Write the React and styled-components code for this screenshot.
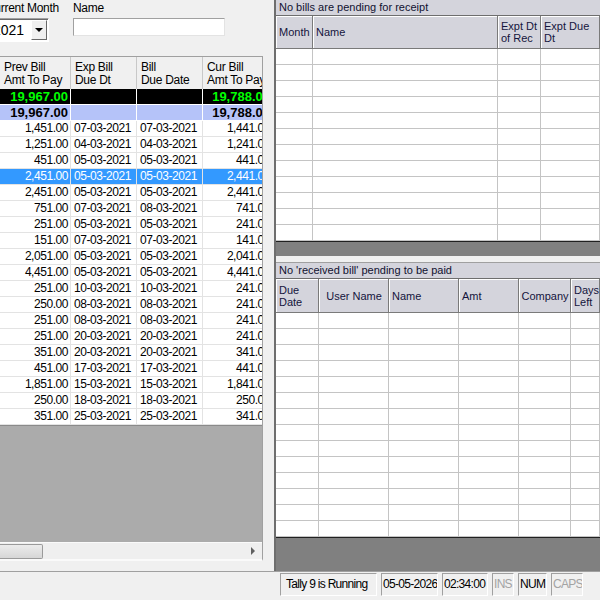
import React from 'react'
import styled, { createGlobalStyle } from 'styled-components'

const GlobalStyle = createGlobalStyle`
  html, body { margin: 0; padding: 0; background: #f0f0f0; }
  body { font-family: "Liberation Sans", Arial, sans-serif; }
`

const Window = styled.div`
  width: 600px;
  height: 600px;
  overflow: hidden;
  display: flex;
  flex-direction: column;
  background: #f0f0f0;
`

const Main = styled.div`
  height: 571px;
  display: flex;
  flex-shrink: 0;
`

/* ---------- left side ---------- */

const LeftPanel = styled.div`
  width: 274px;
  flex-shrink: 0;
  overflow: hidden;
  display: flex;
  flex-direction: column;
`

const FilterRow = styled.div`
  height: 56px;
  display: flex;
  align-items: flex-start;
  gap: 24px;
  flex-shrink: 0;
`

const Field = styled.div`
  display: flex;
  flex-direction: column;
  gap: 3px;
  margin-left: ${p => p.$shift || 0}px;
  width: ${p => p.$w}px;
  flex-shrink: 0;
`

const Label = styled.div`
  font-size: 12px;
  letter-spacing: -0.3px;
  color: #000;
  padding-top: 1px;
  white-space: nowrap;
`

const Combo = styled.div`
  height: 24px;
  box-sizing: border-box;
  border: 1px solid #a0a0a0;
  border-right-color: #fff;
  border-bottom-color: #fff;
  background: #fff;
  display: flex;
  align-items: center;
  font-size: 14px;
  padding-left: 6px;
  box-shadow: inset 1px 1px 0 #696969;
`

const ComboText = styled.span`
  flex: 1;
`

const DropButton = styled.div`
  width: 16px;
  height: 20px;
  margin-right: 1px;
  box-sizing: border-box;
  background: #f0f0f0;
  border: 1px solid #fff;
  border-right-color: #696969;
  border-bottom-color: #696969;
  display: flex;
  align-items: center;
  justify-content: center;
  &::after {
    content: '';
    border-left: 4px solid transparent;
    border-right: 4px solid transparent;
    border-top: 4px solid #000;
  }
`

const TextBox = styled.div`
  height: 18px;
  box-sizing: border-box;
  background: #fff;
  border: 1px solid #a0a0a0;
  border-right-color: #e3e3e3;
  border-bottom-color: #e3e3e3;
`

const Grid = styled.div`
  width: 263px;
  height: 505px;
  box-sizing: border-box;
  border-top: 1px solid #a0a0a0;
  border-right: 1px solid #a0a0a0;
  border-bottom: 2px solid #fafafa;
  display: flex;
  flex-direction: column;
  overflow: hidden;
  flex-shrink: 0;
`

const GridRow = styled.div`
  display: flex;
  flex-shrink: 0;
  height: ${p => (p.$head ? 32 : 16)}px;
  background: ${p => p.$bg || '#fff'};
  color: ${p => p.$fg || '#000'};
`

const widths = [71, 66, 66, 70]

const Cell = styled.div`
  width: ${p => widths[p.$col]}px;
  flex-shrink: 0;
  box-sizing: border-box;
  border-right: 1px solid ${p => p.$line || '#e3e3e3'};
  border-bottom: 1px solid ${p => p.$line || '#e3e3e3'};
  font-size: ${p => (p.$bold ? 13 : 12)}px;
  font-weight: ${p => (p.$bold ? 700 : 400)};
  letter-spacing: ${p => (p.$bold ? 0 : -0.45)}px;
  text-align: ${p => (p.$right ? 'right' : 'left')};
  padding: 0 ${p => (p.$right ? 2 : 0)}px 0 ${p => (p.$right ? 0 : 3)}px;
  line-height: 15px;
  white-space: nowrap;
  overflow: hidden;
`

const HeadCell = styled.div`
  width: ${p => widths[p.$col]}px;
  flex-shrink: 0;
  box-sizing: border-box;
  border-right: 1px solid #c8c8c8;
  background: #f0f0f0;
  font-size: 12px;
  letter-spacing: -0.3px;
  line-height: 13px;
  padding: 4px 0 0 4px;
  white-space: nowrap;
  overflow: hidden;
`

const EmptyArea = styled.div`
  flex: 1;
  background: #ababab;
  border-top: 1px solid #8a8a8a;
`

const HScroll = styled.div`
  height: 16px;
  flex-shrink: 0;
  background: #efefef;
  border-top: 1px solid #fafafa;
  display: flex;
  align-items: center;
  justify-content: space-between;
  padding-right: 7px;
`

const Thumb = styled.div`
  width: 43px;
  height: 15px;
  box-sizing: border-box;
  border: 1px solid #9a9a9a;
  border-left: none;
  border-radius: 0 2px 2px 0;
  background: linear-gradient(#ececec, #d6d6d6);
`

const ArrowRight = styled.div`
  border-top: 4px solid transparent;
  border-bottom: 4px solid transparent;
  border-left: 4px solid #606060;
`

/* ---------- right side ---------- */

const RightPanel = styled.div`
  flex: 1;
  display: flex;
  flex-direction: column;
  border-left: 2px solid #6e6e6e;
  min-width: 0;
`

const Section = styled.div`
  display: flex;
  flex-direction: column;
  height: ${p => p.$h}px;
  flex-shrink: 0;
  border-top: ${p => (p.$top ? '1px solid #a0a0a0' : 'none')};
  overflow: hidden;
`

const Gap = styled.div`
  height: 6px;
  flex-shrink: 0;
  background: #f0f0f0;
`

const TitleBar = styled.div`
  height: 16px;
  flex-shrink: 0;
  box-sizing: border-box;
  background: #d4d4dc;
  border-bottom: 1px solid #6e6e6e;
  font-size: 11px;
  line-height: 15px;
  padding-left: 3px;
  color: #111130;
  white-space: nowrap;
`

const TableHead = styled.div`
  display: flex;
  height: ${p => p.$h}px;
  flex-shrink: 0;
`

const THead = styled.div`
  width: ${p => p.$w}px;
  flex: ${p => (p.$grow ? 1 : 'none')};
  box-sizing: border-box;
  background: #d4d4dc;
  border-right: 1px solid #7a7a7a;
  border-bottom: 1px solid #7a7a7a;
  box-shadow: inset 1px 1px 0 #fff;
  font-size: 11px;
  line-height: 12px;
  color: #14143c;
  display: flex;
  align-items: center;
  justify-content: ${p => (p.$center ? 'center' : 'flex-start')};
  text-align: ${p => (p.$center ? 'center' : 'left')};
  padding: 0 2px 0 3px;
  overflow: hidden;
`

const TRow = styled.div`
  display: flex;
  height: 16px;
  flex-shrink: 0;
  background: #fff;
`

const TCell = styled.div`
  width: ${p => p.$w}px;
  flex: ${p => (p.$grow ? 1 : 'none')};
  box-sizing: border-box;
  border-right: 1px solid #c4c4c4;
  border-bottom: 1px solid #c4c4c4;
`

const Filler = styled.div`
  flex: 1;
  background: #808080;
  border-top: 1px solid #202020;
`

/* ---------- status bar ---------- */

const StatusBar = styled.div`
  flex: 1;
  border-top: 1px solid #a0a0a0;
  display: flex;
  justify-content: flex-end;
  align-items: flex-start;
  gap: 4px;
  padding: 1px 17px 0 0;
`

const Pane = styled.div`
  width: ${p => p.$w}px;
  height: 23px;
  box-sizing: border-box;
  border: 1px solid #a0a0a0;
  border-right-color: #fff;
  border-bottom-color: #fff;
  font-size: 12px;
  letter-spacing: -0.7px;
  line-height: 21px;
  padding-left: ${p => p.$pad ?? 1}px;
  color: ${p => (p.$off ? '#a3a3a3' : '#000')};
  white-space: nowrap;
  overflow: hidden;
`

const rows = [
  ['1,451.00', '07-03-2021', '07-03-2021', '1,441.00'],
  ['1,251.00', '04-03-2021', '04-03-2021', '1,241.00'],
  ['451.00', '05-03-2021', '05-03-2021', '441.00'],
  ['2,451.00', '05-03-2021', '05-03-2021', '2,441.00', true],
  ['2,451.00', '05-03-2021', '05-03-2021', '2,441.00'],
  ['751.00', '07-03-2021', '08-03-2021', '741.00'],
  ['251.00', '05-03-2021', '05-03-2021', '241.00'],
  ['151.00', '07-03-2021', '07-03-2021', '141.00'],
  ['2,051.00', '05-03-2021', '05-03-2021', '2,041.00'],
  ['4,451.00', '05-03-2021', '05-03-2021', '4,441.00'],
  ['251.00', '10-03-2021', '10-03-2021', '241.00'],
  ['250.00', '08-03-2021', '08-03-2021', '241.00'],
  ['251.00', '08-03-2021', '08-03-2021', '241.00'],
  ['251.00', '20-03-2021', '20-03-2021', '241.00'],
  ['351.00', '20-03-2021', '20-03-2021', '341.00'],
  ['451.00', '17-03-2021', '17-03-2021', '441.00'],
  ['1,851.00', '15-03-2021', '15-03-2021', '1,841.00'],
  ['250.00', '18-03-2021', '18-03-2021', '250.00'],
  ['351.00', '25-03-2021', '25-03-2021', '341.00'],
]

const receiptCols = [
  { label: 'Month', w: 37 },
  { label: 'Name', w: 185 },
  { label: <>Expt Dt<br />of Rec</>, w: 43 },
  { label: <>Expt Due<br />Dt</>, grow: true },
]

const payCols = [
  { label: <>Due<br />Date</>, w: 43 },
  { label: 'User Name', w: 70, center: true },
  { label: 'Name', w: 70 },
  { label: 'Amt', w: 60 },
  { label: 'Company', w: 52, center: true },
  { label: <>Days<br />Left</>, grow: true },
]

const PendingTable = ({ title, cols, count, headH, height, top }) => (
  <Section $h={height} $top={top}>
    <TitleBar>{title}</TitleBar>
    <TableHead $h={headH}>
      {cols.map((c, i) => (
        <THead key={i} $w={c.w} $grow={c.grow} $center={c.center}>{c.label}</THead>
      ))}
    </TableHead>
    {Array.from({ length: count }).map((_, r) => (
      <TRow key={r}>
        {cols.map((c, i) => <TCell key={i} $w={c.w} $grow={c.grow} />)}
      </TRow>
    ))}
    <Filler />
  </Section>
)

const TotalRow = ({ value, cur, bg, fg }) => (
  <GridRow $bg={bg} $fg={fg}>
    <Cell $col={0} $right $bold $line="#fff">{value}</Cell>
    <Cell $col={1} $line="#fff" />
    <Cell $col={2} $line="#fff" />
    <Cell $col={3} $right $bold $line="#fff">{cur}</Cell>
  </GridRow>
)

export default function App() {
  return (
    <Window>
      <GlobalStyle />
      <Main>
        <LeftPanel>
          <FilterRow>
            <Field $w={63} $shift={-14}>
              <Label>Current Month</Label>
              <Combo>
                <ComboText>2021</ComboText>
                <DropButton />
              </Combo>
            </Field>
            <Field $w={152}>
              <Label>Name</Label>
              <TextBox />
            </Field>
          </FilterRow>
          <Grid>
            <GridRow $head $bg="#f0f0f0">
              <HeadCell $col={0}>Prev Bill<br />Amt To Pay</HeadCell>
              <HeadCell $col={1}>Exp Bill<br />Due Dt</HeadCell>
              <HeadCell $col={2}>Bill<br />Due Date</HeadCell>
              <HeadCell $col={3}>Cur Bill<br />Amt To Pay</HeadCell>
            </GridRow>
            <TotalRow value="19,967.00" cur="19,788.00" bg="#000" fg="#00ff00" />
            <TotalRow value="19,967.00" cur="19,788.00" bg="#b5c3f9" fg="#000" />
            {rows.map((r, i) => (
              <GridRow key={i} $bg={r[4] ? '#3399ff' : '#fff'} $fg={r[4] ? '#fff' : '#000'}>
                <Cell $col={0} $right>{r[0]}</Cell>
                <Cell $col={1}>{r[1]}</Cell>
                <Cell $col={2}>{r[2]}</Cell>
                <Cell $col={3} $right>{r[3]}</Cell>
              </GridRow>
            ))}
            <EmptyArea />
            <HScroll>
              <Thumb />
              <ArrowRight />
            </HScroll>
          </Grid>
        </LeftPanel>
        <RightPanel>
          <PendingTable
            title="No bills are pending for receipt"
            cols={receiptCols}
            count={12}
            headH={33}
            height={256}
          />
          <Gap />
          <PendingTable
            title="No 'received bill' pending to be paid"
            cols={payCols}
            count={14}
            headH={34}
            height={309}
            top
          />
        </RightPanel>
      </Main>
      <StatusBar>
        <Pane $w={97} $pad={5}>Tally 9 is Running</Pane>
        <Pane $w={57}>05-05-2026</Pane>
        <Pane $w={46}>02:34:00</Pane>
        <Pane $w={22} $off>INS</Pane>
        <Pane $w={29}>NUM</Pane>
        <Pane $w={32} $off>CAPS</Pane>
      </StatusBar>
    </Window>
  )
}
